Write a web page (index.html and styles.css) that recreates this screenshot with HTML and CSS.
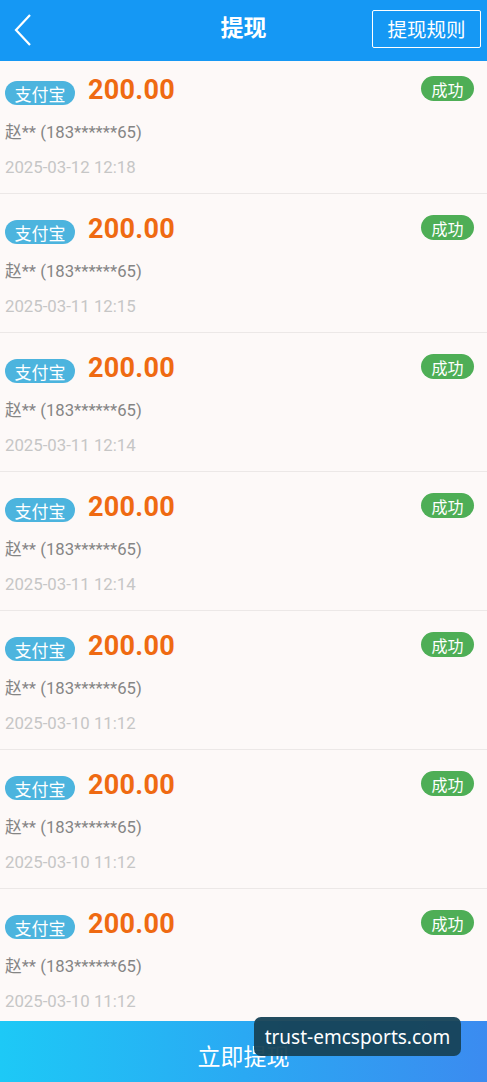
FILE: index.html
```html
<!DOCTYPE html>
<html lang="zh">
<head>
<meta charset="utf-8">
<title>提现</title>
<link rel="stylesheet" href="styles.css">
</head>
<body>
<div class="app">
  <header class="topbar">
    <svg class="back" width="20" height="34" viewBox="0 0 20 34"><polyline points="17,2 3,17 17,32" fill="none" stroke="#fff" stroke-width="2.2" stroke-linejoin="miter"/></svg>
    <div class="title">提现</div>
    <div class="rules">提现规则</div>
  </header>
  <main class="list">
    <div class="item">
      <div class="row"><span class="tag">支付宝</span><span class="amount">200.00</span><span class="status">成功</span></div>
      <div class="name">赵** (183******65)</div>
      <div class="date">2025-03-12 12:18</div>
    </div>
    <div class="item">
      <div class="row"><span class="tag">支付宝</span><span class="amount">200.00</span><span class="status">成功</span></div>
      <div class="name">赵** (183******65)</div>
      <div class="date">2025-03-11 12:15</div>
    </div>
    <div class="item">
      <div class="row"><span class="tag">支付宝</span><span class="amount">200.00</span><span class="status">成功</span></div>
      <div class="name">赵** (183******65)</div>
      <div class="date">2025-03-11 12:14</div>
    </div>
    <div class="item">
      <div class="row"><span class="tag">支付宝</span><span class="amount">200.00</span><span class="status">成功</span></div>
      <div class="name">赵** (183******65)</div>
      <div class="date">2025-03-11 12:14</div>
    </div>
    <div class="item">
      <div class="row"><span class="tag">支付宝</span><span class="amount">200.00</span><span class="status">成功</span></div>
      <div class="name">赵** (183******65)</div>
      <div class="date">2025-03-10 11:12</div>
    </div>
    <div class="item">
      <div class="row"><span class="tag">支付宝</span><span class="amount">200.00</span><span class="status">成功</span></div>
      <div class="name">赵** (183******65)</div>
      <div class="date">2025-03-10 11:12</div>
    </div>
    <div class="item">
      <div class="row"><span class="tag">支付宝</span><span class="amount">200.00</span><span class="status">成功</span></div>
      <div class="name">赵** (183******65)</div>
      <div class="date">2025-03-10 11:12</div>
    </div>
  </main>
  <footer class="bottom">立即提现</footer>
  <div class="watermark">trust-emcsports.com</div>
</div>
</body>
</html>
```
FILE: styles.css
```css
* { box-sizing: border-box; }
html, body { margin: 0; padding: 0; }
body {
  font-family: Roboto, "Noto Sans CJK SC", sans-serif;
  background: #fdf9f8;
  overflow: hidden;
}
.app {
  position: relative;
  width: 487px;
  height: 1082px;
  display: flex;
  flex-direction: column;
  overflow: hidden;
}
.topbar {
  height: 61px;
  flex: none;
  background: #1598f4;
  display: flex;
  align-items: center;
  position: relative;
  padding: 0 6px 0 13px;
}
.back { flex: none; margin-top: -2px; }
.title {
  position: absolute;
  left: 0; right: 0;
  top: 14px;
  text-align: center;
  color: #fff;
  font-size: 23px;
  line-height: 30px;
  font-weight: bold;
  pointer-events: none;
}
.rules {
  margin-left: auto;
  border: 1.5px solid #fff;
  border-radius: 2px;
  color: #fff;
  font-size: 19.5px;
  height: 38px;
  width: 109px;
  display: flex;
  align-items: center;
  justify-content: center;
  margin-top: -4px;
}
.list {
  flex: 1;
  overflow: hidden;
}
.item {
  padding: 22px 13px 14px 5px;
  border-bottom: 1px solid #ece8e7;
}
.item:first-child { padding-top: 16px; }
.row {
  height: 32px;
  display: flex;
  align-items: center;
}
.tag {
  background: #4cb4de;
  color: #fff;
  font-size: 17px;
  height: 24px;
  width: 70px;
  border-radius: 12px;
  display: flex;
  align-items: center;
  justify-content: center;
}
.amount {
  color: #ef6a12;
  font-size: 27px;
  font-weight: bold;
  margin-left: 13px;
  margin-bottom: 6px;
  letter-spacing: 0.3px;
}
.status {
  margin-left: auto;
  align-self: flex-start;
  margin-top: -1px;
  background: #4eae56;
  color: #fff;
  font-size: 16px;
  height: 25px;
  width: 53px;
  border-radius: 13px;
  display: flex;
  align-items: center;
  justify-content: center;
}
.name {
  margin-top: 12px;
  line-height: 24px;
  font-size: 16.7px;
  color: #858585;
}
.date {
  margin-top: 10px;
  line-height: 24px;
  font-size: 16.8px;
  color: #c6c6c6;
}
.bottom {
  height: 61px;
  flex: none;
  background: linear-gradient(90deg, #1dc9f6 0%, #2aa9f3 50%, #3b8bf0 100%);
  color: #fff;
  font-size: 23px;
  display: flex;
  align-items: center;
  justify-content: center;
  padding-top: 6px;
}
.watermark {
  position: absolute;
  left: 254px;
  top: 1017px;
  width: 207px;
  height: 39px;
  background: rgba(22, 66, 86, 0.95);
  border-radius: 7px;
  color: #fff;
  font-family: "Noto Sans", sans-serif;
  font-size: 19px;
  display: flex;
  align-items: center;
  justify-content: center;
}
```
